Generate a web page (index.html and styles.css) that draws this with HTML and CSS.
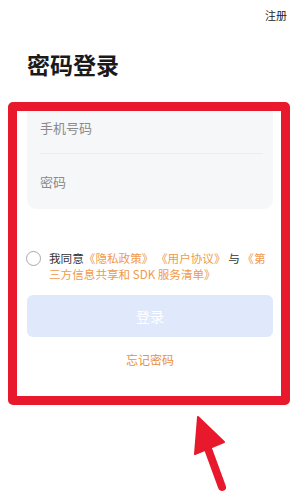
FILE: index.html
```html
<!DOCTYPE html>
<html lang="zh">
<head>
<meta charset="utf-8">
<link rel="stylesheet" href="styles.css">
</head>
<body>
<div class="page">
  <div class="topbar"><span class="register">注册</span></div>
  <h1 class="title">密码登录</h1>
  <div class="card">
    <div class="row row1">手机号码</div>
    <div class="divider"></div>
    <div class="row row2">密码</div>
  </div>
  <div class="agree">
    <span class="check"></span>
    <p class="agree-text">我同意<span class="link">《隐私政策》</span> <span class="link">《用户协议》</span> 与 <span class="link">《第</span><span class="link">三方信息共享和 SDK 服务清单》</span></p>
  </div>
  <button class="login">登录</button>
  <div class="forgot">忘记密码</div>
</div>
<div class="highlight"></div>
<svg class="arrow" width="300" height="496" viewBox="0 0 300 496">
  <line x1="207" y1="446" x2="222" y2="487" stroke="#e8192c" stroke-width="8" stroke-linecap="round"/>
  <polygon points="198,417 224,442 195,454" fill="#e8192c" stroke="#e8192c" stroke-width="2" stroke-linejoin="round"/>
</svg>
</body>
</html>
```
FILE: styles.css
```css
* { box-sizing: border-box; }
html, body { margin: 0; padding: 0; background: #fff; }
body {
  width: 300px;
  height: 496px;
  overflow: hidden;
  position: relative;
  font-family: "Noto Sans CJK SC", "Noto Sans", sans-serif;
  color: #222;
}
.page { padding: 0 27px; }
.topbar {
  height: 32px;
  display: flex;
  justify-content: flex-end;
  align-items: center;
  margin-right: -14px;
}
.register { font-size: 11px; color: #222; line-height: 16px; margin-top: -2px; }
.title {
  margin: 17px 0 0 0;
  font-size: 23px;
  line-height: 30px;
  font-weight: 700;
  color: #1a1a1a;
}
.card {
  margin-top: 23px;
  background: #f6f7f9;
  border-radius: 9px;
  padding: 0 10px 0 13px;
}
.row {
  display: flex;
  align-items: center;
  font-size: 13px;
  color: #8a8a8a;
}
.row1 { height: 51px; }
.row2 { height: 55px; }
.divider { height: 1px; background: #ebedf0; }
.agree {
  margin-top: 41px;
  display: flex;
  align-items: flex-start;
  gap: 8px;
}
.check {
  flex: none;
  width: 15px;
  height: 15px;
  border: 1px solid #a8a8a8;
  border-radius: 50%;
  margin-top: 1px;
  margin-left: -1px;
}
.agree-text {
  margin: 0;
  font-size: 11.6px;
  line-height: 16px;
  color: #333;
}
.link { color: #f09a4c; }
.login {
  display: block;
  width: 100%;
  height: 42px;
  margin-top: 13px;
  border: none;
  border-radius: 6px;
  background: #dfe9fb;
  color: #fff;
  font-family: inherit;
  font-size: 14px;
}
.forgot {
  margin-top: 15px;
  text-align: center;
  font-size: 12px;
  line-height: 16px;
  color: #e8913f;
}
.highlight {
  position: absolute;
  left: 8px;
  top: 102px;
  width: 282px;
  height: 303px;
  border: 9px solid #e8192c;
  border-radius: 5px;
}
.arrow { position: absolute; left: 0; top: 0; }
```
